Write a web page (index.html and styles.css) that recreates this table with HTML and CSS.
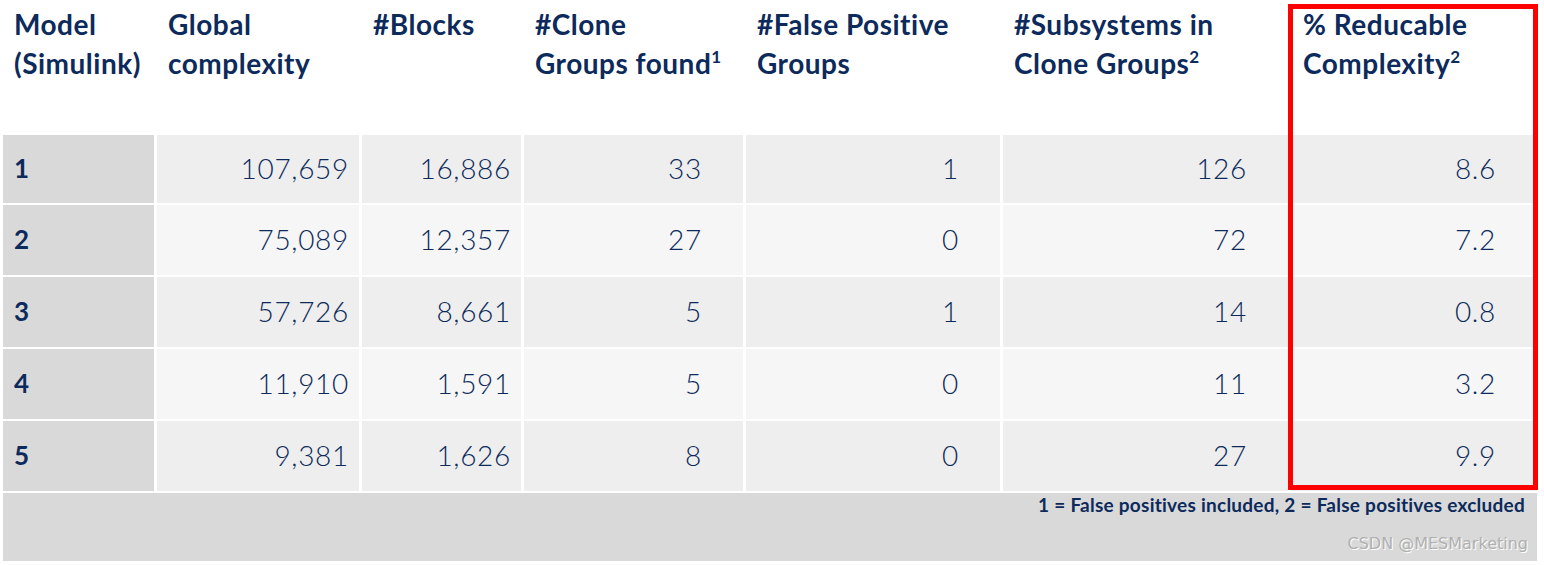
FILE: index.html
```html
<!DOCTYPE html>
<html>
<head>
<meta charset="utf-8">
<link rel="stylesheet" href="styles.css">
</head>
<body>
<div class="page">
  <div class="grid">
    <div class="hd">Model<br>(Simulink)</div>
    <div class="hd">Global<br>complexity</div>
    <div class="hd">#Blocks</div>
    <div class="hd">#Clone<br>Groups found<sup>1</sup></div>
    <div class="hd">#False Positive<br>Groups</div>
    <div class="hd">#Subsystems in<br>Clone Groups<sup>2</sup></div>
    <div class="hd hd-last">% Reducable<br>Complexity<sup>2</sup></div>

    <div class="c id">1</div><div class="c odd p1">107,659</div><div class="c odd p1">16,886</div><div class="c odd p2">33</div><div class="c odd p2">1</div><div class="c odd p2">126</div><div class="c odd p2">8.6</div>
    <div class="c id">2</div><div class="c even p1">75,089</div><div class="c even p1">12,357</div><div class="c even p2">27</div><div class="c even p2">0</div><div class="c even p2">72</div><div class="c even p2">7.2</div>
    <div class="c id">3</div><div class="c odd p1">57,726</div><div class="c odd p1">8,661</div><div class="c odd p2">5</div><div class="c odd p2">1</div><div class="c odd p2">14</div><div class="c odd p2">0.8</div>
    <div class="c id">4</div><div class="c even p1">11,910</div><div class="c even p1">1,591</div><div class="c even p2">5</div><div class="c even p2">0</div><div class="c even p2">11</div><div class="c even p2">3.2</div>
    <div class="c id">5</div><div class="c odd p1">9,381</div><div class="c odd p1">1,626</div><div class="c odd p2">8</div><div class="c odd p2">0</div><div class="c odd p2">27</div><div class="c odd p2">9.9</div>

    <div class="foot">
      <div class="note">1 = False positives included, 2 = False positives excluded</div>
      <div class="mark">CSDN @MESMarketing</div>
    </div>
  </div>
  <div class="highlight"></div>
</div>
</body>
</html>
```
FILE: styles.css
```css
html, body {
  margin: 0;
  padding: 0;
  background: #ffffff;
}
.page {
  position: relative;
  width: 1544px;
  height: 565px;
  overflow: hidden;
  font-family: Lato, "Open Sans", sans-serif;
  color: #0c2a5b;
}
.grid {
  margin-left: 3px;
  display: grid;
  grid-template-columns: 151px 202px 159px 219px 254px 285px 246px;
  grid-template-rows: 133px 68px 70px 70px 70px 70px 68px;
  column-gap: 3px;
  row-gap: 2px;
  width: 1534px;
}
.hd {
  background: #ffffff;
  font-weight: 700;
  font-size: 28px;
  letter-spacing: 0.5px;
  line-height: 39px;
  padding: 5px 0 0 11px;
  white-space: nowrap;
}
.hd sup {
  font-size: 17px;
  line-height: 0;
  vertical-align: 0;
  position: relative;
  top: -11px;
  margin-left: 0;
  letter-spacing: 0;
}
.hd-last {
  padding-left: 12px;
}
.c {
  display: flex;
  align-items: center;
  justify-content: flex-end;
  font-size: 28px;
  letter-spacing: 0.7px;
  font-weight: 300;
  padding-bottom: 2px;
}
.c.id {
  justify-content: flex-start;
  background: #d9d9d9;
  font-weight: 700;
  font-size: 26px;
  letter-spacing: 0;
  padding-left: 11px;
}
.odd { background: #eeeeee; }
.even { background: #f6f6f6; }
.p1 { padding-right: 10px; }
.p2 { padding-right: 41px; }
.foot {
  grid-column: 1 / -1;
  background: #d9d9d9;
  display: flex;
  flex-direction: column;
  align-items: flex-end;
  padding: 1px 12px 0 0;
}
.note {
  font-weight: 700;
  font-size: 19px;
  letter-spacing: 0.25px;
  line-height: 22px;
}
.mark {
  margin-top: 18px;
  margin-right: -3px;
  font-family: "DejaVu Sans", sans-serif;
  font-size: 16px;
  color: #b0b0b0;
  text-shadow: 1px 1px 0 #ffffff;
}
.highlight {
  position: absolute;
  left: 1288px;
  top: 4px;
  width: 240px;
  height: 476px;
  border: 5px solid #ff0000;
}
```
